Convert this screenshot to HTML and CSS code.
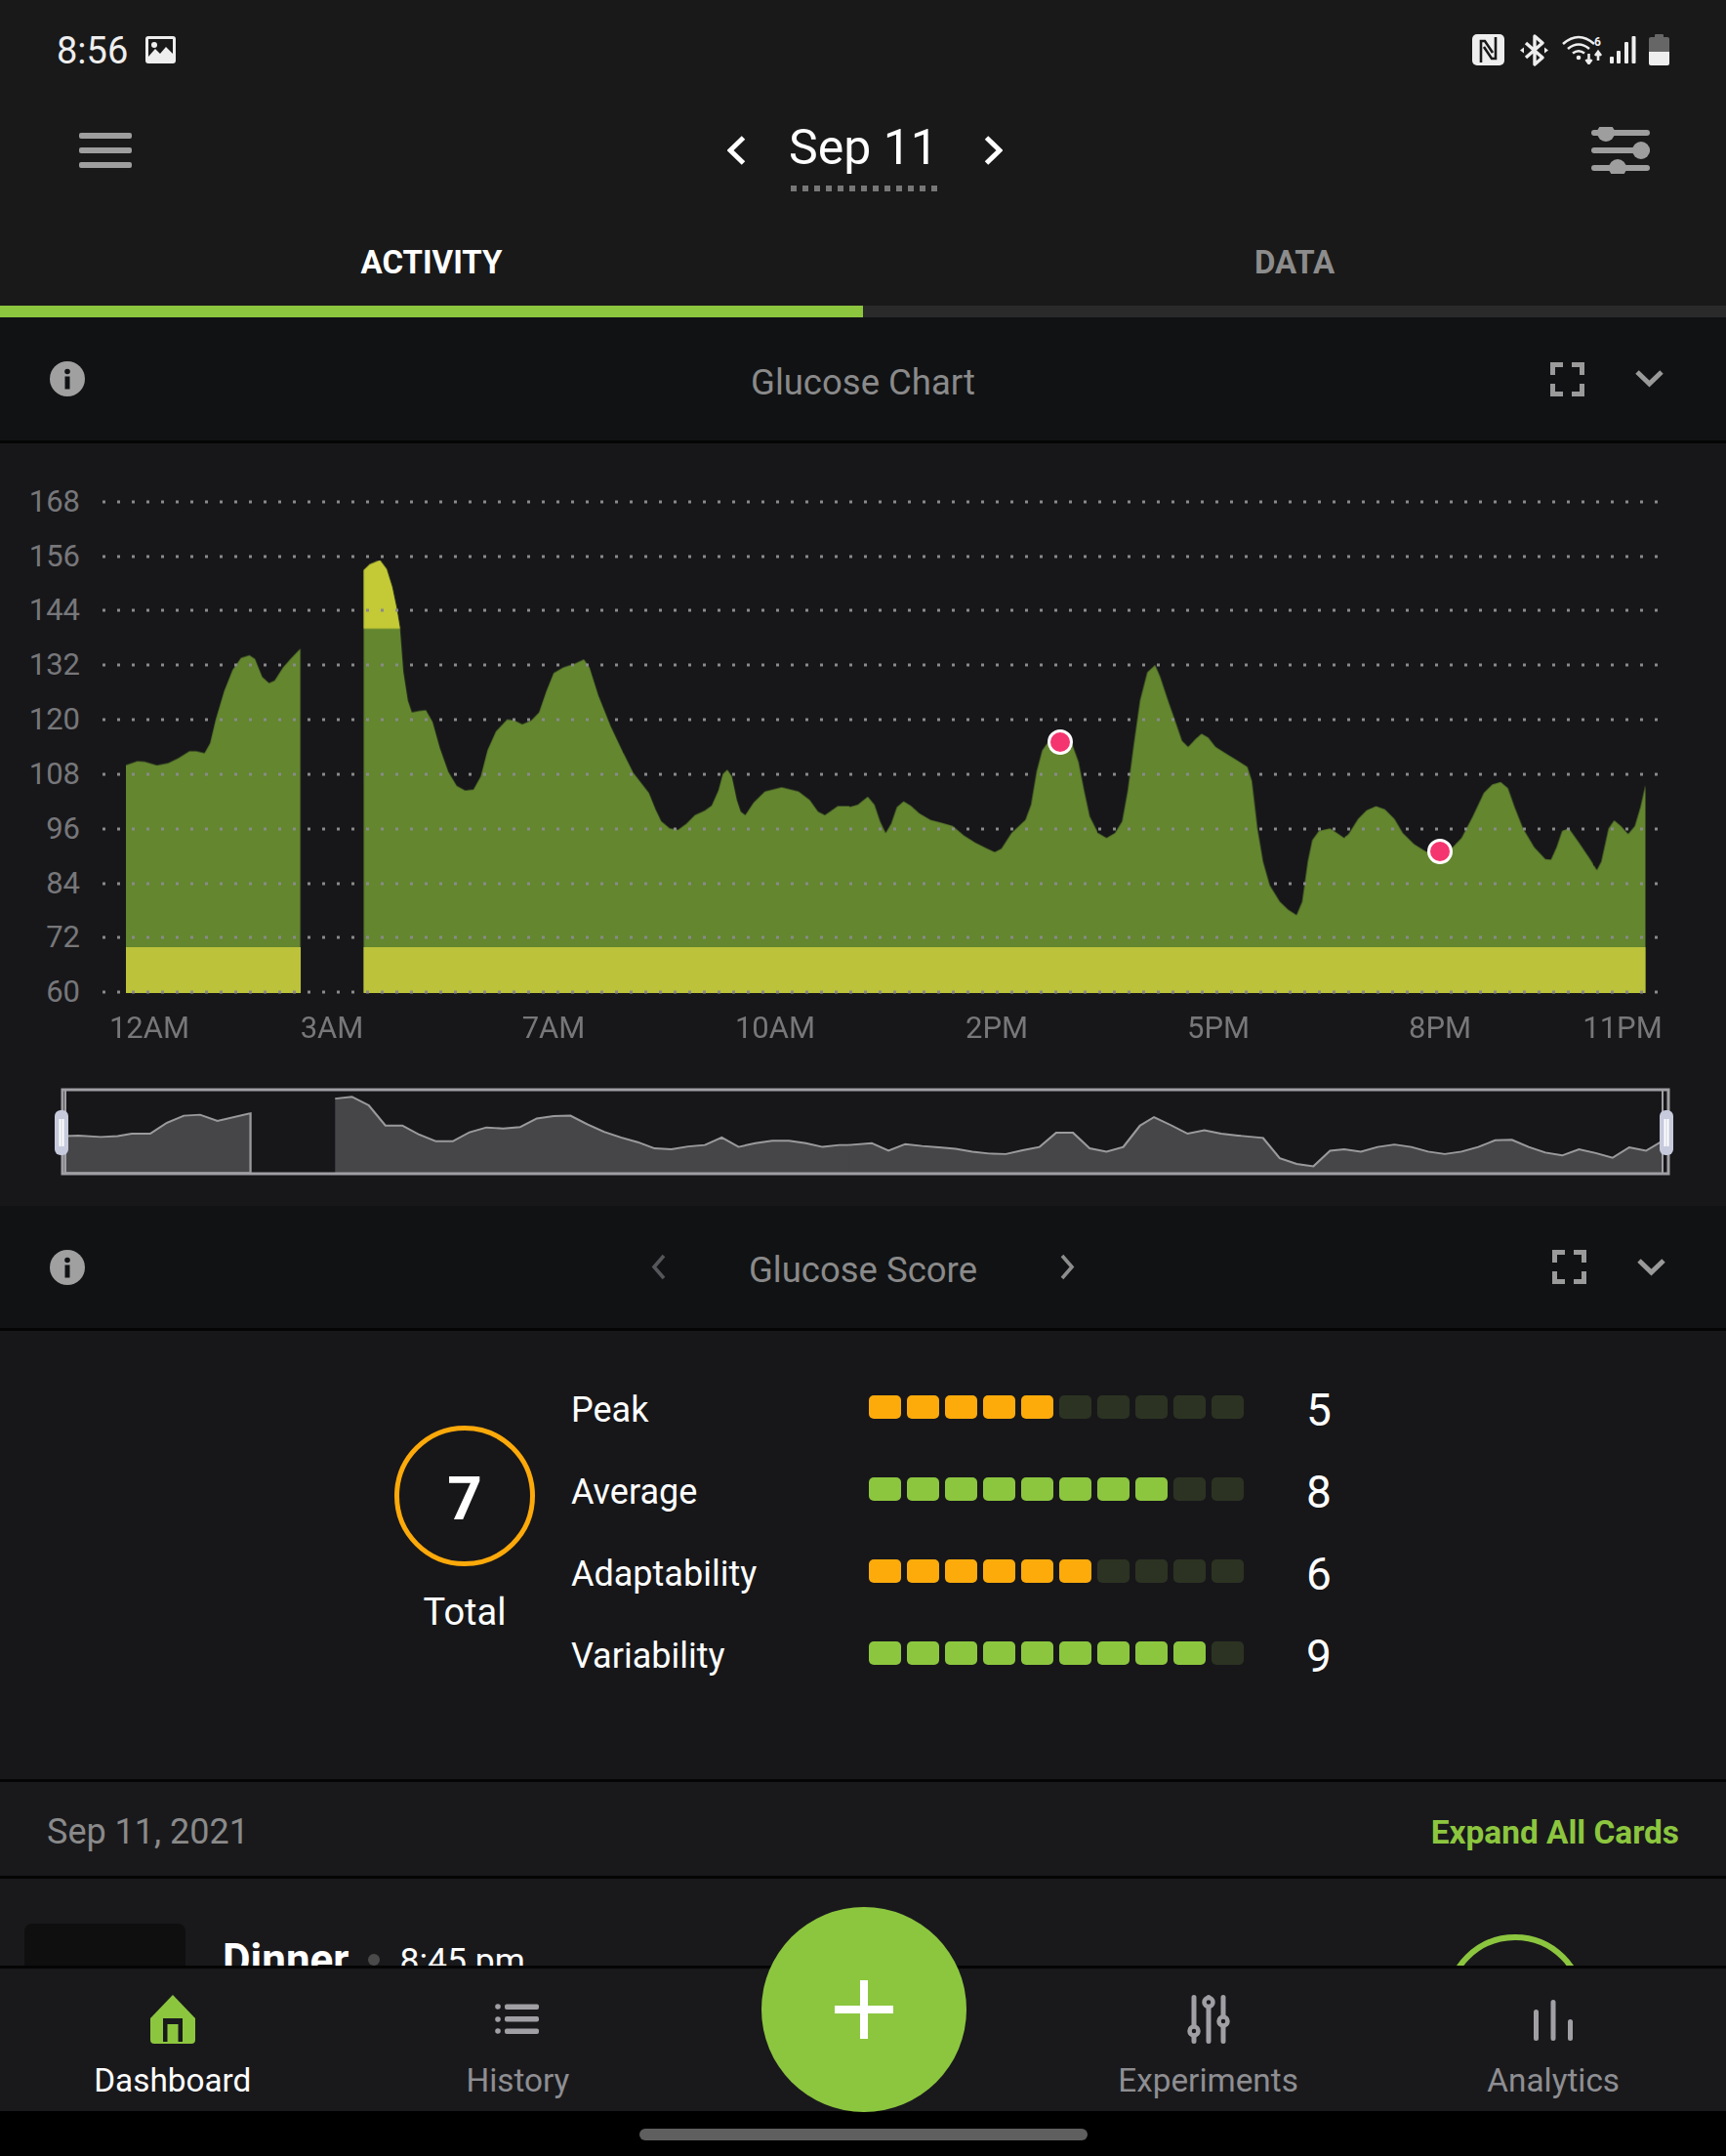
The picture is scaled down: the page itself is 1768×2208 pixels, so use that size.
FILE: index.html
```html
<!DOCTYPE html>
<html lang="en">
<head>
    <meta charset="UTF-8">
    <meta name="viewport" content="width=device-width, initial-scale=1.0">
    <title>Dashboard</title>
    <link rel="stylesheet" href="styles.css">
</head>
<body>
<div class="app">
    <div class="status-bar">
        <div class="status-left">
            <span class="clock">8:56</span>
            <svg class="icon" width="31" height="28" viewBox="0 0 31 28">
                <rect width="31" height="28" rx="3" fill="#eee"/>
                <rect x="3" y="3" width="25" height="21" fill="#191919"/>
                <polygon points="3,21 10,13 15,18 21,11 28,18 28,25 3,25" fill="#eee"/>
                <circle cx="9" cy="9" r="3" fill="#eee"/>
            </svg>
        </div>
        <div class="status-right">
            <svg class="icon nfc" width="33" height="32" viewBox="0 0 33 32">
                <rect width="33" height="32" rx="5" fill="#eee"/>
                <path d="M9 29V7h4l8 12M24 3v22h-4l-8-12" fill="none" stroke="#191919" stroke-width="2.6"/>
            </svg>
            <svg class="icon bt" width="29" height="33" viewBox="0 0 29 33">
                <path d="M6 9l17 15-8 7V2l8 7L6 24" fill="none" stroke="#eee" stroke-width="3.4" stroke-linejoin="round"/>
                <polygon points="0,16.5 4,13.5 4,19.5" fill="#eee"/>
                <polygon points="29,16.5 25,13.5 25,19.5" fill="#eee"/>
            </svg>
            <svg class="icon wifi" width="42" height="30" viewBox="0 0 42 30">
                <g fill="none" stroke="#eee" stroke-width="2.6">
                    <path d="M1 9Q17-5 33 9"/>
                    <path d="M6 14Q17 5 28 14"/>
                    <path d="M11 18.5Q17 14 23 18.5"/>
                    <path d="M27.5 19v9M24.5 25l3 4 3-4"/>
                    <path d="M37 26v-8M34 21l3-4 3 4"/>
                </g>
                <circle cx="17" cy="23" r="2.3" fill="#eee"/>
                <text class="wifi-six" x="33" y="11">6</text>
            </svg>
            <svg class="icon signal" width="27" height="28" viewBox="0 0 27 28">
                <rect x="0" y="21" width="4" height="7" rx="1" fill="#eee"/>
                <rect x="7" y="15" width="4" height="13" rx="1" fill="#eee"/>
                <rect x="15" y="6" width="4" height="22" rx="1" fill="#eee"/>
                <rect x="22.5" y="0" width="4" height="28" rx="1" fill="#eee"/>
            </svg>
            <svg class="icon" width="21" height="32" viewBox="0 0 21 32">
                <path d="M6 3V1q0-1 1-1h7q1 0 1 1v2h4q2 0 2 2v13H0V5q0-2 2-2z" fill="#666"/>
                <path d="M0 18h21v12q0 2-2 2H2q-2 0-2-2z" fill="#eee"/>
            </svg>
        </div>
    </div>

    <div class="top-bar">
        <div class="hamburger"><span></span><span></span><span></span></div>
        <div class="date-nav">
            <svg class="icon" width="19" height="30" viewBox="0 0 19 30"><path d="M16.5 2L3 15l13.5 13" fill="none" stroke="#fff" stroke-width="5"/></svg>
            <div class="date-pick">
                <span class="date-text">Sep 11</span>
                <span class="date-dots"></span>
            </div>
            <svg class="icon" width="19" height="30" viewBox="0 0 19 30"><path d="M2.5 2L16 15 2.500 28" fill="none" stroke="#fff" stroke-width="5"/></svg>
        </div>
        <svg class="icon sliders" width="60" height="48" viewBox="0 0 60 48">
            <path d="M3 6h54M3 24h54M3 42h54" fill="none" stroke="#9e9e9e" stroke-width="6" stroke-linecap="round"/>
            <g fill="#9e9e9e">
                <circle cx="15" cy="6" r="9"/>
                <circle cx="51" cy="24" r="9"/>
                <circle cx="27" cy="42" r="9"/>
            </g>
        </svg>
    </div>

    <div class="tabs">
        <div class="tab active">ACTIVITY</div>
        <div class="tab">DATA</div>
    </div>
    <div class="tab-line"><div class="tab-line-fill"></div></div>

    <div class="card-head first">
        <div class="head-left">
            <svg class="icon" width="36" height="36" viewBox="0 0 36 36">
                <circle cx="18" cy="18" r="18" fill="#a0a0a0"/>
                <circle cx="18" cy="10.5" r="2.8" fill="#111214"/>
                <rect x="15.5" y="15.5" width="5" height="13" fill="#111214"/>
            </svg>
        </div>
        <div class="head-title">Glucose Chart</div>
        <div class="head-right">
            <svg class="icon" width="35" height="35" viewBox="0 0 35 35">
                <path d="M2.5 13V2.5H13M22 2.5h10.5V13M32.5 22v10.500H22M13 32.5H2.5V22" fill="none" stroke="#9a9a9a" stroke-width="5"/>
            </svg>
            <svg class="icon" width="29" height="18" viewBox="0 0 29 18">
                <path d="M2 2l12.5 12L27 2" fill="none" stroke="#9a9a9a" stroke-width="5"/>
            </svg>
        </div>
    </div>

    <div class="chart-section">
        <svg class="chart" width="1768" height="781" viewBox="0 454 1768 781">
            <g class="y-labels">
                <text x="82" y="524">168</text>
                <text x="82" y="580">156</text>
                <text x="82" y="635">144</text>
                <text x="82" y="691">132</text>
                <text x="82" y="747">120</text>
                <text x="82" y="803">108</text>
                <text x="82" y="859">96</text>
                <text x="82" y="915">84</text>
                <text x="82" y="970">72</text>
                <text x="82" y="1026">60</text>
            </g>

            <g class="trace">
                <!-- left half of the trace -->
                <g transform="translate(0 480) scale(0.574 0.4847)">
                    <polygon class="area" points="225,1107 225,626 245,618 258,619 280,627 300,622 318,612 338,597 350,597 365,601 375,580 385,530 400,470 415,425 430,400 445,394 455,402 468,440 480,453 490,448 505,420 520,400 536,380 536,1107"/>
                    <polygon class="area" points="649,1107 649,214 660,202 678,193 690,212 700,250 708,295 714,338 720,430 728,490 735,515 748,512 760,510 772,535 785,590 800,640 815,670 830,680 845,678 858,650 870,595 885,555 905,530 918,532 932,540 948,532 962,515 975,470 988,432 1005,420 1025,412 1042,403 1052,420 1068,480 1090,545 1110,595 1130,642 1158,685 1170,720 1180,745 1195,760 1210,763 1225,750 1240,732 1258,722 1270,712 1282,680 1290,645 1298,636 1306,650 1315,700 1322,725 1330,732 1345,705 1365,682 1395,673 1425,682 1445,700 1460,725 1472,732 1495,713 1516,713 1516,1107"/>
                    <polygon class="area-high" points="649,338 649,214 660,202 678,193 690,212 700,250 708,295 714,338"/>
                </g>
                <!-- right half of the trace -->
                <g transform="translate(870 480) scale(0.5727 0.4847)">
                    <polygon class="area" points="-1,1107 -1,715 15,710 33,693 45,710 55,745 65,770 75,750 85,715 97,703 110,712 125,728 145,742 165,748 185,755 205,775 225,790 245,802 260,810 272,803 290,770 315,742 325,710 335,640 345,595 360,570 380,565 398,580 410,620 420,680 430,735 445,770 460,780 475,770 488,745 498,680 508,590 520,490 533,430 547,415 556,440 570,490 582,530 595,575 606,588 620,570 630,560 642,568 655,588 675,603 695,617 712,630 720,660 730,760 740,830 752,880 770,915 785,932 800,943 810,915 820,830 828,785 840,765 860,760 875,772 885,780 893,772 910,740 925,722 942,713 958,720 975,740 990,770 1010,793 1030,808 1050,818 1075,805 1095,780 1115,735 1135,685 1150,667 1165,662 1178,675 1190,715 1205,760 1225,800 1245,825 1255,826 1265,800 1275,765 1287,760 1305,790 1325,825 1337,848 1345,830 1358,760 1368,743 1380,755 1393,772 1405,755 1415,715 1424,668 1424,1107"/>
                </g>
            </g>
            <rect class="area-low" x="129" y="970" width="179" height="47"/>
            <rect class="area-low" x="372.5" y="970" width="1313" height="47"/>

            <g class="grid">
                <path d="M105 514H1700"/>
                <path d="M105 570H1700"/>
                <path d="M105 625H1700"/>
                <path d="M105 681H1700"/>
                <path d="M105 737H1700"/>
                <path d="M105 793H1700"/>
                <path d="M105 849H1700"/>
                <path d="M105 905H1700"/>
                <path d="M105 960H1700"/>
                <path d="M105 1016H1700"/>
            </g>

            <circle class="marker" cx="1086" cy="760" r="11.5"/>
            <circle class="marker" cx="1475" cy="872" r="11.5"/>

            <g class="x-labels">
                <text x="153" y="1063">12AM</text>
                <text x="340" y="1063">3AM</text>
                <text x="567" y="1063">7AM</text>
                <text x="794" y="1063">10AM</text>
                <text x="1021" y="1063">2PM</text>
                <text x="1248" y="1063">5PM</text>
                <text x="1475" y="1063">8PM</text>
                <text x="1662" y="1063">11PM</text>
            </g>

            <!-- range selector -->
            <g transform="translate(0 480) scale(0.574 0.4847)">
                <polygon class="mini" points="116,1488 116,1410 140,1409 180,1412 210,1410 235,1405 268,1405 298,1382 328,1367 357,1365 388,1378 447,1362 447,1488"/>
                <polygon class="mini-fill" points="598,1488 598,1331 628,1327 658,1345 688,1388 718,1388 748,1407 778,1421 808,1421 838,1402 868,1392 898,1394 928,1391 958,1373 988,1368 1018,1367 1048,1385 1078,1401 1108,1413 1138,1423 1168,1436 1198,1438 1228,1432 1258,1429 1288,1413 1318,1433 1348,1425 1378,1420 1408,1420 1438,1425 1468,1433 1498,1429 1516,1429 1516,1488"/>
                <polyline class="mini-line" points="598,1331 628,1327 658,1345 688,1388 718,1388 748,1407 778,1421 808,1421 838,1402 868,1392 898,1394 928,1391 958,1373 988,1368 1018,1367 1048,1385 1078,1401 1108,1413 1138,1423 1168,1436 1198,1438 1228,1432 1258,1429 1288,1413 1318,1433 1348,1425 1378,1420 1408,1420 1438,1425 1468,1433 1498,1429 1516,1429"/>
            </g>
            <g transform="translate(870 480) scale(0.5727 0.4847)">
                <polygon class="mini-fill" points="-1,1488 -1,1429 40,1425 70,1441 100,1427 130,1431 160,1434 190,1437 220,1443 250,1447 280,1448 310,1440 340,1433 370,1403 400,1403 430,1436 460,1443 490,1433 520,1388 545,1370 575,1387 605,1405 635,1398 665,1405 695,1409 740,1414 770,1457 800,1469 830,1474 860,1441 885,1438 915,1443 945,1433 975,1428 1005,1433 1035,1443 1065,1448 1095,1443 1125,1433 1155,1419 1185,1418 1215,1433 1245,1445 1275,1451 1305,1438 1335,1446 1365,1456 1395,1434 1425,1441 1455,1420 1455,1488"/>
                <polyline class="mini-line" points="-1,1429 40,1425 70,1441 100,1427 130,1431 160,1434 190,1437 220,1443 250,1447 280,1448 310,1440 340,1433 370,1403 400,1403 430,1436 460,1443 490,1433 520,1388 545,1370 575,1387 605,1405 635,1398 665,1405 695,1409 740,1414 770,1457 800,1469 830,1474 860,1441 885,1438 915,1443 945,1433 975,1428 1005,1433 1035,1443 1065,1448 1095,1443 1125,1433 1155,1419 1185,1418 1215,1433 1245,1445 1275,1451 1305,1438 1335,1446 1365,1456 1395,1434 1425,1441 1455,1420"/>
            </g>
            <rect class="mini-frame" x="64" y="1116" width="1645" height="86"/>
            <path class="mini-edge" d="M67 1116V1202M1703 1116V1202"/>
            <g class="handle">
                <rect x="56" y="1137" width="14" height="46" rx="6"/>
                <path d="M61.5 1146V1174M64.5 1146V1174"/>
            </g>
            <g class="handle">
                <rect x="1700" y="1137" width="14" height="46" rx="6"/>
                <path d="M1705.5 1146V1174M1708.5 1146V1174"/>
            </g>
        </svg>
    </div>

    <div class="card-head second">
        <div class="head-left">
            <svg class="icon" width="36" height="36" viewBox="0 0 36 36">
                <circle cx="18" cy="18" r="18" fill="#a0a0a0"/>
                <circle cx="18" cy="10.5" r="2.8" fill="#111214"/>
                <rect x="15.5" y="15.5" width="5" height="13" fill="#111214"/>
            </svg>
        </div>
        <div class="head-center">
            <svg class="icon" width="15" height="27" viewBox="0 0 15 27"><path d="M13 2L3 13.5 13 25" fill="none" stroke="#55565a" stroke-width="3.6"/></svg>
            <div class="head-title">Glucose Score</div>
            <svg class="icon" width="15" height="27" viewBox="0 0 15 27"><path d="M2 2l10 11.5L2 25" fill="none" stroke="#8d8d8d" stroke-width="3.6"/></svg>
        </div>
        <div class="head-right">
            <svg class="icon" width="35" height="35" viewBox="0 0 35 35">
                <path d="M2.5 13V2.5H13M22 2.5h10.5V13M32.5 22v10.500H22M13 32.5H2.5V22" fill="none" stroke="#9a9a9a" stroke-width="5"/>
            </svg>
            <svg class="icon" width="29" height="18" viewBox="0 0 29 18">
                <path d="M2 2l12.5 12L27 2" fill="none" stroke="#9a9a9a" stroke-width="5"/>
            </svg>
        </div>
    </div>

    <div class="score-section">
        <div class="total">
            <div class="total-ring"><span class="total-num">7</span></div>
            <div class="total-label">Total</div>
        </div>
        <div class="score-rows">
            <div class="score-row">
                <div class="score-name">Peak</div>
                <div class="segs orange">
                    <i class="on"></i><i class="on"></i><i class="on"></i><i class="on"></i><i class="on"></i><i></i><i></i><i></i><i></i><i></i>
                </div>
                <div class="score-value">5</div>
            </div>
            <div class="score-row">
                <div class="score-name">Average</div>
                <div class="segs green">
                    <i class="on"></i><i class="on"></i><i class="on"></i><i class="on"></i><i class="on"></i><i class="on"></i><i class="on"></i><i class="on"></i><i></i><i></i>
                </div>
                <div class="score-value">8</div>
            </div>
            <div class="score-row">
                <div class="score-name">Adaptability</div>
                <div class="segs orange">
                    <i class="on"></i><i class="on"></i><i class="on"></i><i class="on"></i><i class="on"></i><i class="on"></i><i></i><i></i><i></i><i></i>
                </div>
                <div class="score-value">6</div>
            </div>
            <div class="score-row">
                <div class="score-name">Variability</div>
                <div class="segs green">
                    <i class="on"></i><i class="on"></i><i class="on"></i><i class="on"></i><i class="on"></i><i class="on"></i><i class="on"></i><i class="on"></i><i class="on"></i><i></i>
                </div>
                <div class="score-value">9</div>
            </div>
        </div>
    </div>

    <div class="date-row">
        <span class="date-label">Sep 11, 2021</span>
        <span class="expand">Expand All Cards</span>
    </div>

    <div class="meal-card">
        <div class="meal-thumb"></div>
        <div class="meal-title">Dinner</div>
        <div class="meal-dot"></div>
        <div class="meal-time">8:45 pm</div>
        <div class="meal-ring"></div>
    </div>

    <div class="bottom-nav">
        <div class="nav-item active">
            <svg class="icon" width="46" height="50" viewBox="0 0 46 50">
                <path d="M23 0l23 24v22q0 4-4 4H4q-4 0-4-4V24z" fill="#8cc63f"/>
                <path d="M13 48V24h20v24h-4.500V30h-11v18z" fill="#19191c"/>
            </svg>
            <span>Dashboard</span>
        </div>
        <div class="nav-item">
            <svg class="icon" width="46" height="50" viewBox="0 0 46 50">
                <g fill="#a09fa3">
                    <circle cx="3" cy="12" r="2.8"/>
                    <circle cx="3" cy="25" r="2.8"/>
                    <circle cx="3" cy="37" r="2.8"/>
                    <rect x="10" y="9.5" width="35" height="5.5" rx="2"/>
                    <rect x="10" y="22" width="35" height="5.5" rx="2"/>
                    <rect x="10" y="34.5" width="35" height="5.5" rx="2"/>
                </g>
            </svg>
            <span>History</span>
        </div>
        <div class="nav-item"></div>
        <div class="nav-item">
            <svg class="icon" width="46" height="50" viewBox="0 0 46 50">
                <path d="M8 2.5v45M23 2.5v45M38 2.5v45" stroke="#a09fa3" stroke-width="5" stroke-linecap="round"/>
                <g fill="#19191c" stroke="#a09fa3" stroke-width="4.5">
                    <circle cx="8" cy="37" r="4.5"/>
                    <circle cx="23" cy="7.5" r="4.5"/>
                    <circle cx="38" cy="27" r="4.5"/>
                </g>
            </svg>
            <span>Experiments</span>
        </div>
        <div class="nav-item">
            <svg class="icon" width="46" height="50" viewBox="0 0 46 50">
                <path d="M5.5 17.5v27M23 7.5v37M40.5 27.5v17" stroke="#a09fa3" stroke-width="5" stroke-linecap="round"/>
            </svg>
            <span>Analytics</span>
        </div>
    </div>

    <div class="home-area"><div class="home-pill"></div></div>

    <div class="fab"><div class="fab-plus"></div></div>
</div>
</body>
</html>
```

FILE: styles.css
```css
* {
    box-sizing: border-box;
}

body {
    margin: 0;
    padding: 0;
    background-color: #000;
    font-family: Roboto, "Liberation Sans", sans-serif;
}

.app {
    position: relative;
    width: 1768px;
    height: 2208px;
    overflow: hidden;
    display: flex;
    flex-direction: column;
}

.icon {
    display: block;
    flex: none;
}

/* status bar */

.status-bar {
    height: 102px;
    padding: 0 58px;
    display: flex;
    justify-content: space-between;
    align-items: center;
    background-color: #191919;
}

.status-left {
    display: flex;
    align-items: center;
    gap: 18px;
}

.clock {
    color: #eee;
    font-size: 38px;
    padding-top: 2px;
}

.status-right {
    display: flex;
    align-items: center;
    gap: 13px;
}

.status-right .nfc {
    margin-right: 3px;
}

.status-right .bt {
    margin-right: 1px;
}

.status-right .wifi {
    margin-right: -6px;
}

.wifi-six {
    fill: #eee;
    font-size: 12px;
    font-weight: 700;
}

/* top bar */

.top-bar {
    height: 104px;
    padding: 0 78px 0 81px;
    display: grid;
    grid-template-columns: 1fr auto 1fr;
    align-items: center;
    background-color: #191919;
}

.hamburger {
    width: 54px;
    display: flex;
    flex-direction: column;
    gap: 9px;
}

.hamburger span {
    display: block;
    height: 6px;
    border-radius: 2px;
    background-color: #9e9e9e;
}

.date-nav {
    display: flex;
    align-items: center;
    gap: 46px;
}

.date-pick {
    width: 150px;
    margin-right: 2px;
    display: flex;
    flex-direction: column;
    align-items: center;
    padding-top: 11px;
}

.date-text {
    color: #fff;
    font-size: 50px;
    line-height: 55px;
    white-space: nowrap;
}

.date-dots {
    width: 150px;
    height: 6px;
    margin-top: 11px;
    background-image: repeating-linear-gradient(90deg, #777 0, #777 6px, transparent 6px, transparent 12px);
}

.sliders {
    justify-self: end;
}

/* tabs */

.tabs {
    height: 107px;
    padding-top: 17px;
    display: flex;
    background-color: #191919;
}

.tab {
    flex: 1;
    display: flex;
    align-items: center;
    justify-content: center;
    color: #8c8c8c;
    font-size: 33px;
    font-weight: 700;
}

.tab.active {
    color: #fff;
}

.tab-line {
    height: 12px;
    background-color: #2a2a2a;
}

.tab-line-fill {
    width: 884px;
    height: 100%;
    background-color: #8cc63f;
}

/* card headers */

.card-head {
    display: grid;
    grid-template-columns: 1fr auto 1fr;
    align-items: center;
    background-color: #111214;
    border-bottom: 3px solid #050505;
}

.card-head.first {
    height: 129px;
}

.card-head.second {
    height: 128px;
}

.head-left {
    padding-left: 51px;
}

.head-right {
    display: flex;
    justify-content: flex-end;
    align-items: center;
    gap: 52px;
    padding-right: 64px;
}

.second .head-right {
    padding-right: 62px;
}

.head-title {
    color: #8a8a8a;
    font-size: 36.5px;
    padding-top: 6px;
}

.head-center {
    display: flex;
    align-items: center;
    gap: 85px;
}

/* chart */

.chart-section {
    height: 781px;
    background-color: #17171a;
}

.chart {
    display: block;
}

.chart text {
    font-family: Roboto, "Liberation Sans", sans-serif;
    font-size: 31px;
    fill: #77777a;
}

.y-labels {
    text-anchor: end;
}

.x-labels {
    text-anchor: middle;
}

/* the frame is a little soft, so the traced edge is too */
.trace {
    filter: blur(0.7px);
}

.area {
    fill: #63862f;
}

.area-high {
    fill: #c4c936;
}

.area-low {
    fill: #bcc23a;
}

.grid path {
    fill: none;
    stroke: #8a8a8a;
    stroke-width: 3;
    stroke-dasharray: 3 12;
}

.marker {
    fill: #f5356f;
    stroke: #fff;
    stroke-width: 3;
}

.mini,
.mini-fill {
    fill: #464649;
}

.mini {
    stroke: #9a9a9d;
    stroke-width: 4;
}

.mini-line {
    fill: none;
    stroke: #9a9a9d;
    stroke-width: 4;
}

.mini-frame {
    fill: none;
    stroke: #a0a0a4;
    stroke-width: 3;
}

.mini-edge {
    fill: none;
    stroke: #a0a0a4;
    stroke-width: 2;
}

.handle rect {
    fill: #c6cadc;
}

.handle path {
    fill: none;
    stroke: #fff;
    stroke-width: 2;
}

/* score */

.score-section {
    height: 462px;
    padding: 36px 0 0 404px;
    display: flex;
    gap: 37px;
    background-color: #17171a;
    border-bottom: 3px solid #050505;
}

.total {
    width: 144px;
    padding-top: 61px;
    display: flex;
    flex-direction: column;
    align-items: center;
}

.total-ring {
    width: 144px;
    height: 144px;
    border: 5px solid #fca90a;
    border-radius: 50%;
    display: flex;
    align-items: center;
    justify-content: center;
    color: #fff;
    font-size: 62px;
    font-weight: 700;
}

.total-num {
    padding-top: 5px;
}

.total-label {
    margin-top: 25px;
    color: #fff;
    font-size: 38px;
}

.score-rows {
    display: flex;
    flex-direction: column;
}

.score-row {
    height: 84px;
    display: flex;
    align-items: center;
}

.score-name {
    width: 305px;
    padding-top: 6px;
    color: #fff;
    font-size: 36px;
}

.segs {
    display: flex;
    gap: 6px;
}

.segs i {
    display: block;
    width: 33px;
    height: 24px;
    border-radius: 5px;
    background-color: #2c3322;
}

.segs.orange .on {
    background-color: #fcab0b;
}

.segs.green .on {
    background-color: #8cc63f;
}

.score-value {
    width: 46px;
    margin-left: 54px;
    padding-top: 6px;
    color: #fff;
    font-size: 46px;
    text-align: center;
}

/* date row */

.date-row {
    height: 99px;
    padding: 0 48px;
    display: flex;
    justify-content: space-between;
    align-items: center;
    background-color: #19191c;
    border-bottom: 3px solid #050505;
}

.date-label {
    padding-top: 6px;
    color: #8a8a8a;
    font-size: 36px;
}

.expand {
    padding-top: 6px;
    color: #8cc63f;
    font-size: 33.4px;
    font-weight: 700;
}

/* meal card, cut off by the nav */

.meal-card {
    height: 89px;
    overflow: hidden;
    display: flex;
    align-items: flex-start;
    background-color: #19191c;
}

.meal-thumb {
    width: 165px;
    height: 100px;
    margin: 46px 0 0 25px;
    border-radius: 8px;
    background-color: #0f0f10;
}

.meal-title {
    margin: 59px 0 0 38px;
    color: #fff;
    font-size: 44px;
    font-weight: 700;
    line-height: 48px;
}

.meal-dot {
    width: 12px;
    height: 12px;
    margin: 77px 0 0 20px;
    border-radius: 50%;
    background-color: #4a4a4a;
}

.meal-time {
    margin: 64px 0 0 20px;
    color: #fff;
    font-size: 35.5px;
    line-height: 40px;
}

.meal-ring {
    width: 144px;
    height: 144px;
    margin: 57px 144px 0 auto;
    border: 6px solid #8cc63f;
    border-radius: 50%;
    flex: none;
}

/* bottom nav */

.bottom-nav {
    height: 149px;
    display: flex;
    background-color: #19191c;
    border-top: 3px solid #050505;
}

.nav-item {
    flex: 1;
    padding-top: 27px;
    display: flex;
    flex-direction: column;
    align-items: center;
    gap: 18px;
    color: #8e8e92;
    font-size: 33.3px;
    line-height: 40px;
}

.nav-item.active {
    color: #fff;
}

.home-area {
    height: 46px;
    padding-top: 18px;
    display: flex;
    justify-content: center;
    background-color: #000;
}

.home-pill {
    width: 459px;
    height: 12px;
    border-radius: 6px;
    background-color: #5f5f5f;
}

.fab {
    position: absolute;
    left: 780px;
    top: 1953px;
    width: 210px;
    height: 210px;
    border-radius: 50%;
    background-color: #8cc63f;
    display: flex;
    align-items: center;
    justify-content: center;
}

.fab-plus {
    position: relative;
    width: 60px;
    height: 8px;
    background-color: #fff;
}

.fab-plus::after {
    content: "";
    position: absolute;
    left: 26px;
    top: -26px;
    width: 8px;
    height: 60px;
    background-color: #fff;
}
```
